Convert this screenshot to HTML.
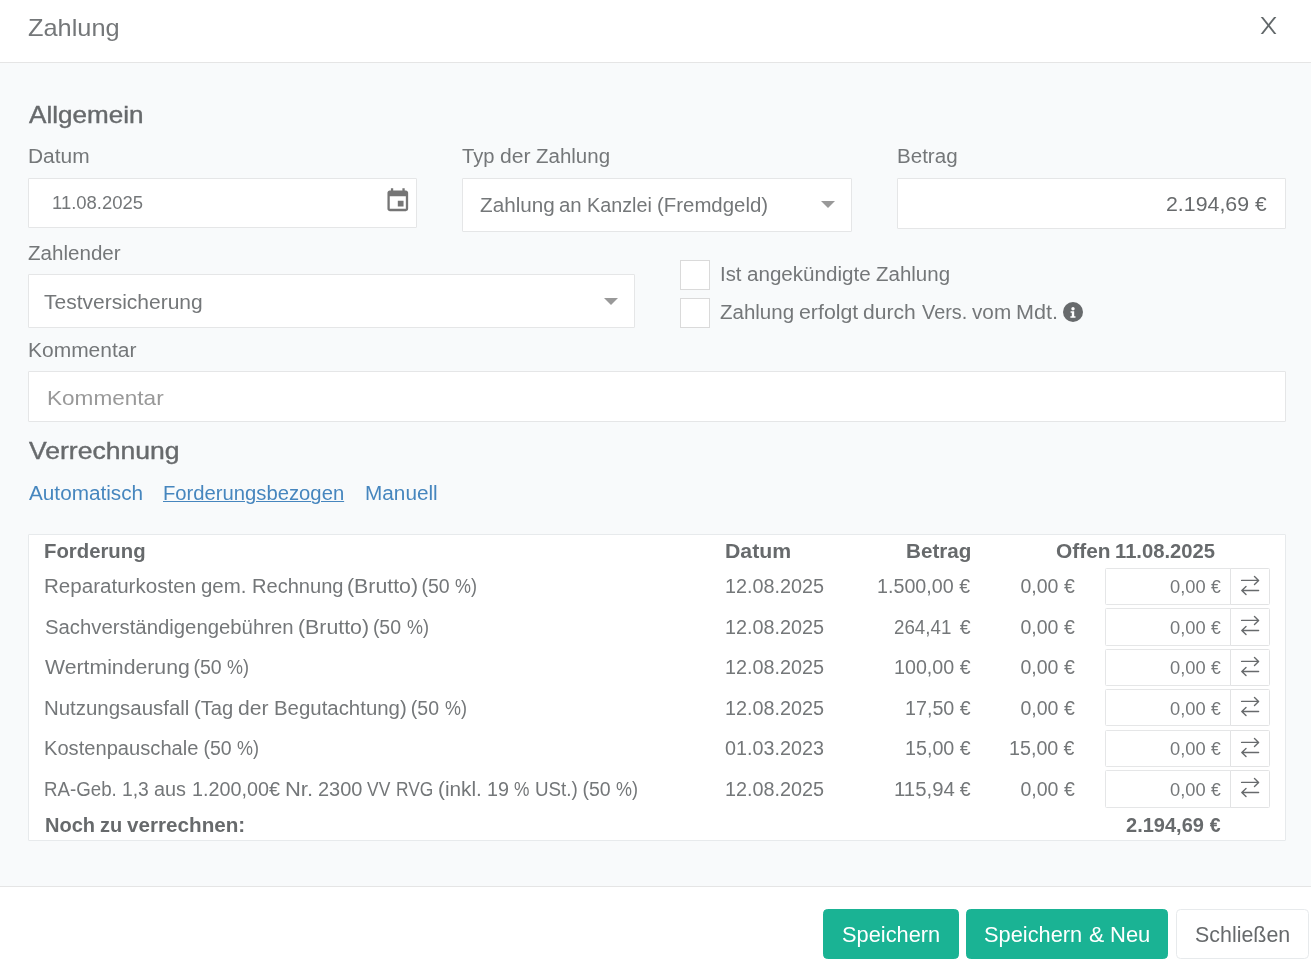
<!DOCTYPE html>
<html lang="de">
<head>
<meta charset="utf-8">
<title>Zahlung</title>
<style>
*{box-sizing:border-box;margin:0;padding:0}
html,body{width:1311px;height:964px;overflow:hidden}
body{position:relative;background:#f8fafb;font-family:"Liberation Sans",sans-serif;color:#676a6c}
.t{position:absolute;white-space:nowrap;transform-origin:0 0;display:block;font-weight:400}
.tx{position:absolute;left:0;top:0;width:1311px;height:964px;will-change:transform}
.bx{position:absolute;background:#fff;border:1px solid #e5e6e7;border-radius:1px}
.hd{display:block;position:absolute;left:0;top:0;width:1311px;height:63px;background:#fff;border-bottom:1px solid #e5e5e5}
.ft{display:block;position:absolute;left:0;top:886px;width:1311px;height:78px;background:#fff;border-top:1px solid #e5e5e5}
.btn{position:absolute;top:909px;height:50px;border-radius:4.5px}
.btn.p{background:#1ab394;border:1px solid #1ab394}
.btn.w{background:#fff;border:1px solid #e7eaec}
svg{position:absolute;overflow:visible}
</style>
</head>
<body>
<header class="hd"></header>
<footer class="ft"></footer>

<!-- form boxes -->
<div class="bx" style="left:28px;top:178px;width:389px;height:50px"></div>
<div class="bx" style="left:462px;top:178px;width:390px;height:54px"></div>
<div class="bx" style="left:897px;top:178px;width:389px;height:51px"></div>
<div class="bx" style="left:28px;top:274px;width:607px;height:54px"></div>
<div class="bx" style="left:680px;top:260px;width:30px;height:30px;border-radius:0;border-color:#dadada"></div>
<div class="bx" style="left:680px;top:298px;width:30px;height:30px;border-radius:0;border-color:#dadada"></div>
<div class="bx" style="left:28px;top:371px;width:1258px;height:51px"></div>
<div class="bx" style="left:28px;top:534px;width:1258px;height:307px;border-color:#e7eaec"></div>

<!-- row inputs -->
<div class="bx" style="left:1105px;top:568px;width:126px;height:37px;border-radius:1.5px 0 0 1.5px"></div>
<div class="bx" style="left:1230px;top:568px;width:40px;height:37px;border-color:#e2e3e4;border-radius:0 1.5px 1.5px 0"></div>
<svg style="left:0;top:0" width="1" height="1"><path d="M1241.6 580.40H1258.4 M1254.5 576.50L1258.6 580.40L1254.5 584.40 M1258.6 590.50H1241.9 M1246 586.60L1241.8 590.50L1246 594.50" stroke="#676a6c" stroke-width="1.4" fill="none" stroke-linecap="round" stroke-linejoin="round"/></svg>
<div class="bx" style="left:1105px;top:608px;width:126px;height:38px;border-radius:1.5px 0 0 1.5px"></div>
<div class="bx" style="left:1230px;top:608px;width:40px;height:38px;border-color:#e2e3e4;border-radius:0 1.5px 1.5px 0"></div>
<svg style="left:0;top:0" width="1" height="1"><path d="M1241.6 620.40H1258.4 M1254.5 616.50L1258.6 620.40L1254.5 624.40 M1258.6 630.50H1241.9 M1246 626.60L1241.8 630.50L1246 634.50" stroke="#676a6c" stroke-width="1.4" fill="none" stroke-linecap="round" stroke-linejoin="round"/></svg>
<div class="bx" style="left:1105px;top:649px;width:126px;height:37px;border-radius:1.5px 0 0 1.5px"></div>
<div class="bx" style="left:1230px;top:649px;width:40px;height:37px;border-color:#e2e3e4;border-radius:0 1.5px 1.5px 0"></div>
<svg style="left:0;top:0" width="1" height="1"><path d="M1241.6 661.40H1258.4 M1254.5 657.50L1258.6 661.40L1254.5 665.40 M1258.6 671.50H1241.9 M1246 667.60L1241.8 671.50L1246 675.50" stroke="#676a6c" stroke-width="1.4" fill="none" stroke-linecap="round" stroke-linejoin="round"/></svg>
<div class="bx" style="left:1105px;top:689px;width:126px;height:37px;border-radius:1.5px 0 0 1.5px"></div>
<div class="bx" style="left:1230px;top:689px;width:40px;height:37px;border-color:#e2e3e4;border-radius:0 1.5px 1.5px 0"></div>
<svg style="left:0;top:0" width="1" height="1"><path d="M1241.6 701.40H1258.4 M1254.5 697.50L1258.6 701.40L1254.5 705.40 M1258.6 711.50H1241.9 M1246 707.60L1241.8 711.50L1246 715.50" stroke="#676a6c" stroke-width="1.4" fill="none" stroke-linecap="round" stroke-linejoin="round"/></svg>
<div class="bx" style="left:1105px;top:730px;width:126px;height:37px;border-radius:1.5px 0 0 1.5px"></div>
<div class="bx" style="left:1230px;top:730px;width:40px;height:37px;border-color:#e2e3e4;border-radius:0 1.5px 1.5px 0"></div>
<svg style="left:0;top:0" width="1" height="1"><path d="M1241.6 742.40H1258.4 M1254.5 738.50L1258.6 742.40L1254.5 746.40 M1258.6 752.50H1241.9 M1246 748.60L1241.8 752.50L1246 756.50" stroke="#676a6c" stroke-width="1.4" fill="none" stroke-linecap="round" stroke-linejoin="round"/></svg>
<div class="bx" style="left:1105px;top:770px;width:126px;height:38px;border-radius:1.5px 0 0 1.5px"></div>
<div class="bx" style="left:1230px;top:770px;width:40px;height:38px;border-color:#e2e3e4;border-radius:0 1.5px 1.5px 0"></div>
<svg style="left:0;top:0" width="1" height="1"><path d="M1241.6 782.40H1258.4 M1254.5 778.50L1258.6 782.40L1254.5 786.40 M1258.6 792.50H1241.9 M1246 788.60L1241.8 792.50L1246 796.50" stroke="#676a6c" stroke-width="1.4" fill="none" stroke-linecap="round" stroke-linejoin="round"/></svg>

<!-- buttons -->
<div class="btn p" role="button" style="left:823px;width:136px"></div>
<div class="btn p" role="button" style="left:966px;width:202px"></div>
<div class="btn w" role="button" style="left:1176px;width:133px"></div>

<!-- close X -->
<svg style="left:0;top:0" width="1" height="1"><path d="M1260.7 16.9h2.3l13.4 17h-2.3z" fill="#62686a"/><path d="M1276.4 16.9h-2.3l-13.4 17h2.3z" fill="#62686a"/></svg>

<!-- calendar icon -->
<svg style="left:384.2px;top:187.25px" width="27.6" height="27.6" viewBox="0 0 24 24"><path fill="#757575" d="M17 12h-5v5h5v-5zM16 1v2H8V1H6v2H5c-1.11 0-1.99.9-1.99 2L3 19c0 1.1.89 2 2 2h14c1.1 0 2-.9 2-2V5c0-1.1-.9-2-2-2h-1V1h-2zm3 18H5V8h14v11z"/></svg>

<!-- select arrows -->
<svg style="left:821px;top:201px" width="14" height="7" viewBox="0 0 14 7"><path d="M0 0h14L7 7z" fill="#999"/></svg>
<svg style="left:604px;top:298px" width="14" height="7" viewBox="0 0 14 7"><path d="M0 0h14L7 7z" fill="#999"/></svg>

<!-- info icon -->
<svg style="left:1062.9px;top:301.9px" width="20" height="20" viewBox="0 0 20 20"><circle cx="10" cy="10" r="10" fill="#676a6c"/><circle cx="10" cy="6.7" r="1.7" fill="#fff"/><path d="M7.6 9.2h3.6v5h1.3v1.6H7.4v-1.6h1.4v-3.4H7.6z" fill="#fff"/></svg>

<div class="tx">
<h4><span class="t" style="left:27.98px;top:16.00px;font-size:24px;line-height:24px;transform:scaleX(1.0562);color:#747779;">Zahlung</span></h4>
<h3><span class="t" style="left:28.70px;top:103.00px;font-size:24px;line-height:24px;transform:scaleX(1.0863);-webkit-text-stroke:0.4px;">Allgemein</span></h3>
<label><span class="t" style="left:28.37px;top:147.00px;font-size:19.5px;line-height:19.5px;transform:scaleX(1.0731);color:#747779;">Datum</span></label>
<label><span class="t" style="left:462.19px;top:147.00px;font-size:19.5px;line-height:19.5px;transform:scaleX(1.0328);color:#747779;">Typ</span> <span class="t" style="left:500.13px;top:147.00px;font-size:19.5px;line-height:19.5px;transform:scaleX(1.0826);color:#747779;">der</span> <span class="t" style="left:536.08px;top:147.00px;font-size:19.5px;line-height:19.5px;transform:scaleX(1.0509);color:#747779;">Zahlung</span></label>
<label><span class="t" style="left:896.69px;top:147.00px;font-size:19.5px;line-height:19.5px;transform:scaleX(1.0548);color:#747779;">Betrag</span></label>
<span><span class="t" style="left:51.87px;top:194.00px;font-size:18px;line-height:18px;transform:scaleX(1.0259);color:#747779;">11.08.2025</span></span>
<span><span class="t" style="left:479.71px;top:196.00px;font-size:19.7px;line-height:19.7px;transform:scaleX(1.0504);color:#747779;">Zahlung</span> <span class="t" style="left:558.64px;top:196.00px;font-size:19.7px;line-height:19.7px;transform:scaleX(1.0375);color:#747779;">an</span> <span class="t" style="left:587.05px;top:196.00px;font-size:19.7px;line-height:19.7px;transform:scaleX(1.0040);color:#747779;">Kanzlei</span> <span class="t" style="left:656.67px;top:196.00px;font-size:19.7px;line-height:19.7px;transform:scaleX(1.0358);color:#747779;">(Fremdgeld)</span></span>
<span><span class="t" style="left:1166.39px;top:193.00px;font-size:21px;line-height:21px;transform:scaleX(1.0157);">2.194,69</span> <span class="t" style="left:1255.09px;top:193.00px;font-size:21px;line-height:21px;transform:scaleX(1.0000);">€</span></span>
<label><span class="t" style="left:28.20px;top:244.00px;font-size:19.5px;line-height:19.5px;transform:scaleX(1.0546);color:#747779;">Zahlender</span></label>
<span><span class="t" style="left:44.34px;top:293.00px;font-size:19.7px;line-height:19.7px;transform:scaleX(1.0663);color:#747779;">Testversicherung</span></span>
<label><span class="t" style="left:719.83px;top:265.00px;font-size:19.5px;line-height:19.5px;transform:scaleX(1.0400);color:#747779;">Ist</span> <span class="t" style="left:746.60px;top:265.00px;font-size:19.5px;line-height:19.5px;transform:scaleX(1.0563);color:#747779;">angekündigte</span> <span class="t" style="left:875.78px;top:265.00px;font-size:19.5px;line-height:19.5px;transform:scaleX(1.0509);color:#747779;">Zahlung</span></label>
<label><span class="t" style="left:720.32px;top:303.00px;font-size:19.5px;line-height:19.5px;transform:scaleX(1.0509);color:#747779;">Zahlung</span> <span class="t" style="left:798.71px;top:303.00px;font-size:19.5px;line-height:19.5px;transform:scaleX(1.0939);color:#747779;">erfolgt</span> <span class="t" style="left:863.45px;top:303.00px;font-size:19.5px;line-height:19.5px;transform:scaleX(1.0802);color:#747779;">durch</span> <span class="t" style="left:921.50px;top:303.00px;font-size:19.5px;line-height:19.5px;transform:scaleX(1.0175);color:#747779;">Vers.</span> <span class="t" style="left:971.51px;top:303.00px;font-size:19.5px;line-height:19.5px;transform:scaleX(1.0629);color:#747779;">vom</span> <span class="t" style="left:1016.20px;top:303.00px;font-size:19.5px;line-height:19.5px;transform:scaleX(1.1079);color:#747779;">Mdt.</span></label>
<label><span class="t" style="left:27.79px;top:341.00px;font-size:19.5px;line-height:19.5px;transform:scaleX(1.0758);color:#747779;">Kommentar</span></label>
<span><span class="t" style="left:46.72px;top:387.00px;font-size:21px;line-height:21px;transform:scaleX(1.0751);color:#999999;">Kommentar</span></span>
<h3><span class="t" style="left:28.60px;top:439.00px;font-size:24px;line-height:24px;transform:scaleX(1.1056);-webkit-text-stroke:0.4px;">Verrechnung</span></h3>
<a><span class="t" style="left:28.82px;top:484.00px;font-size:19.5px;line-height:19.5px;transform:scaleX(1.0637);color:#4686be;">Automatisch</span></a>
<a><span class="t" style="left:162.87px;top:484.00px;font-size:19.5px;line-height:19.5px;transform:scaleX(1.0378);color:#4686be;text-decoration:underline;text-decoration-thickness:1.4px;text-underline-offset:1.2px;">Forderungsbezogen</span></a>
<a><span class="t" style="left:364.98px;top:484.00px;font-size:19.5px;line-height:19.5px;transform:scaleX(1.0649);color:#4686be;">Manuell</span></a>
<b><span class="t" style="left:44.10px;top:542.00px;font-size:19.5px;line-height:19.5px;transform:scaleX(1.0421);font-weight:700;">Forderung</span></b>
<b><span class="t" style="left:724.84px;top:542.00px;font-size:19.5px;line-height:19.5px;transform:scaleX(1.0901);font-weight:700;">Datum</span></b>
<b><span class="t" style="left:905.75px;top:542.00px;font-size:19.5px;line-height:19.5px;transform:scaleX(1.0591);font-weight:700;">Betrag</span></b>
<b><span class="t" style="left:1055.50px;top:542.00px;font-size:19.5px;line-height:19.5px;transform:scaleX(1.0714);font-weight:700;">Offen</span> <span class="t" style="left:1115.25px;top:542.00px;font-size:19.5px;line-height:19.5px;transform:scaleX(1.0369);font-weight:700;">11.08.2025</span></b>
<span><span class="t" style="left:44.14px;top:577.00px;font-size:19.5px;line-height:19.5px;transform:scaleX(1.0548);color:#747779;">Reparaturkosten</span> <span class="t" style="left:201.06px;top:577.00px;font-size:19.5px;line-height:19.5px;transform:scaleX(1.0488);color:#747779;">gem.</span> <span class="t" style="left:251.59px;top:577.00px;font-size:19.5px;line-height:19.5px;transform:scaleX(1.0290);color:#747779;">Rechnung</span> <span class="t" style="left:346.58px;top:577.00px;font-size:19.5px;line-height:19.5px;transform:scaleX(1.0920);color:#747779;">(Brutto)</span> <span class="t" style="left:421.41px;top:577.00px;font-size:19.5px;line-height:19.5px;transform:scaleX(1.0000);color:#747779;">(50</span> <span class="t" style="left:455.33px;top:577.00px;font-size:19.5px;line-height:19.5px;transform:scaleX(0.9205);color:#747779;">%)</span></span>
<span><span class="t" style="left:724.85px;top:577.00px;font-size:19.5px;line-height:19.5px;transform:scaleX(1.0157);color:#747779;">12.08.2025</span></span>
<span><span class="t" style="left:877.02px;top:577.00px;font-size:19.5px;line-height:19.5px;transform:scaleX(1.0102);color:#747779;">1.500,00</span> <span class="t" style="left:959.16px;top:577.00px;font-size:19.5px;line-height:19.5px;transform:scaleX(1.0000);color:#747779;">€</span></span>
<span><span class="t" style="left:1020.50px;top:577.00px;font-size:19.5px;line-height:19.5px;transform:scaleX(1.0000);color:#747779;">0,00</span> <span class="t" style="left:1064.05px;top:577.00px;font-size:19.5px;line-height:19.5px;transform:scaleX(1.0000);color:#747779;">€</span></span>
<span><span class="t" style="left:1170.21px;top:578.00px;font-size:18px;line-height:18px;transform:scaleX(1.0149);color:#747779;">0,00</span> <span class="t" style="left:1210.93px;top:578.00px;font-size:18px;line-height:18px;transform:scaleX(0.9744);color:#747779;">€</span></span>
<span><span class="t" style="left:44.68px;top:618.00px;font-size:19.5px;line-height:19.5px;transform:scaleX(1.0423);color:#747779;">Sachverständigengebühren</span> <span class="t" style="left:298.05px;top:618.00px;font-size:19.5px;line-height:19.5px;transform:scaleX(1.0920);color:#747779;">(Brutto)</span> <span class="t" style="left:372.88px;top:618.00px;font-size:19.5px;line-height:19.5px;transform:scaleX(1.0000);color:#747779;">(50</span> <span class="t" style="left:406.80px;top:618.00px;font-size:19.5px;line-height:19.5px;transform:scaleX(0.9205);color:#747779;">%)</span></span>
<span><span class="t" style="left:724.85px;top:618.00px;font-size:19.5px;line-height:19.5px;transform:scaleX(1.0157);color:#747779;">12.08.2025</span></span>
<span><span class="t" style="left:893.58px;top:618.00px;font-size:19.5px;line-height:19.5px;transform:scaleX(0.9610);color:#747779;">264,41</span> <span class="t" style="left:959.65px;top:618.00px;font-size:19.5px;line-height:19.5px;transform:scaleX(1.0000);color:#747779;">€</span></span>
<span><span class="t" style="left:1020.50px;top:618.00px;font-size:19.5px;line-height:19.5px;transform:scaleX(1.0000);color:#747779;">0,00</span> <span class="t" style="left:1064.05px;top:618.00px;font-size:19.5px;line-height:19.5px;transform:scaleX(1.0000);color:#747779;">€</span></span>
<span><span class="t" style="left:1170.21px;top:619.00px;font-size:18px;line-height:18px;transform:scaleX(1.0149);color:#747779;">0,00</span> <span class="t" style="left:1210.93px;top:619.00px;font-size:18px;line-height:18px;transform:scaleX(0.9744);color:#747779;">€</span></span>
<span><span class="t" style="left:45.03px;top:658.00px;font-size:19.5px;line-height:19.5px;transform:scaleX(1.0892);color:#747779;">Wertminderung</span> <span class="t" style="left:193.50px;top:658.00px;font-size:19.5px;line-height:19.5px;transform:scaleX(1.0000);color:#747779;">(50</span> <span class="t" style="left:227.43px;top:658.00px;font-size:19.5px;line-height:19.5px;transform:scaleX(0.9205);color:#747779;">%)</span></span>
<span><span class="t" style="left:724.85px;top:658.00px;font-size:19.5px;line-height:19.5px;transform:scaleX(1.0157);color:#747779;">12.08.2025</span></span>
<span><span class="t" style="left:893.86px;top:658.00px;font-size:19.5px;line-height:19.5px;transform:scaleX(1.0087);color:#747779;">100,00</span> <span class="t" style="left:959.73px;top:658.00px;font-size:19.5px;line-height:19.5px;transform:scaleX(1.0000);color:#747779;">€</span></span>
<span><span class="t" style="left:1020.50px;top:658.00px;font-size:19.5px;line-height:19.5px;transform:scaleX(1.0000);color:#747779;">0,00</span> <span class="t" style="left:1064.05px;top:658.00px;font-size:19.5px;line-height:19.5px;transform:scaleX(1.0000);color:#747779;">€</span></span>
<span><span class="t" style="left:1170.21px;top:659.00px;font-size:18px;line-height:18px;transform:scaleX(1.0149);color:#747779;">0,00</span> <span class="t" style="left:1210.93px;top:659.00px;font-size:18px;line-height:18px;transform:scaleX(0.9744);color:#747779;">€</span></span>
<span><span class="t" style="left:44.24px;top:699.00px;font-size:19.5px;line-height:19.5px;transform:scaleX(1.0478);color:#747779;">Nutzungsausfall</span> <span class="t" style="left:194.44px;top:699.00px;font-size:19.5px;line-height:19.5px;transform:scaleX(1.0352);color:#747779;">(Tag</span> <span class="t" style="left:238.14px;top:699.00px;font-size:19.5px;line-height:19.5px;transform:scaleX(1.0826);color:#747779;">der</span> <span class="t" style="left:274.06px;top:699.00px;font-size:19.5px;line-height:19.5px;transform:scaleX(1.0463);color:#747779;">Begutachtung)</span> <span class="t" style="left:410.83px;top:699.00px;font-size:19.5px;line-height:19.5px;transform:scaleX(1.0000);color:#747779;">(50</span> <span class="t" style="left:444.75px;top:699.00px;font-size:19.5px;line-height:19.5px;transform:scaleX(0.9205);color:#747779;">%)</span></span>
<span><span class="t" style="left:724.85px;top:699.00px;font-size:19.5px;line-height:19.5px;transform:scaleX(1.0157);color:#747779;">12.08.2025</span></span>
<span><span class="t" style="left:904.93px;top:699.00px;font-size:19.5px;line-height:19.5px;transform:scaleX(1.0108);color:#747779;">17,50</span> <span class="t" style="left:959.65px;top:699.00px;font-size:19.5px;line-height:19.5px;transform:scaleX(1.0000);color:#747779;">€</span></span>
<span><span class="t" style="left:1020.50px;top:699.00px;font-size:19.5px;line-height:19.5px;transform:scaleX(1.0000);color:#747779;">0,00</span> <span class="t" style="left:1064.05px;top:699.00px;font-size:19.5px;line-height:19.5px;transform:scaleX(1.0000);color:#747779;">€</span></span>
<span><span class="t" style="left:1170.21px;top:700.00px;font-size:18px;line-height:18px;transform:scaleX(1.0149);color:#747779;">0,00</span> <span class="t" style="left:1210.93px;top:700.00px;font-size:18px;line-height:18px;transform:scaleX(0.9744);color:#747779;">€</span></span>
<span><span class="t" style="left:44.19px;top:739.00px;font-size:19.5px;line-height:19.5px;transform:scaleX(1.0323);color:#747779;">Kostenpauschale</span> <span class="t" style="left:203.40px;top:739.00px;font-size:19.5px;line-height:19.5px;transform:scaleX(1.0000);color:#747779;">(50</span> <span class="t" style="left:237.32px;top:739.00px;font-size:19.5px;line-height:19.5px;transform:scaleX(0.9205);color:#747779;">%)</span></span>
<span><span class="t" style="left:725.37px;top:739.00px;font-size:19.5px;line-height:19.5px;transform:scaleX(1.0130);color:#747779;">01.03.2023</span></span>
<span><span class="t" style="left:904.93px;top:739.00px;font-size:19.5px;line-height:19.5px;transform:scaleX(1.0108);color:#747779;">15,00</span> <span class="t" style="left:959.65px;top:739.00px;font-size:19.5px;line-height:19.5px;transform:scaleX(1.0000);color:#747779;">€</span></span>
<span><span class="t" style="left:1008.83px;top:739.00px;font-size:19.5px;line-height:19.5px;transform:scaleX(1.0108);color:#747779;">15,00</span> <span class="t" style="left:1063.55px;top:739.00px;font-size:19.5px;line-height:19.5px;transform:scaleX(1.0000);color:#747779;">€</span></span>
<span><span class="t" style="left:1170.21px;top:740.00px;font-size:18px;line-height:18px;transform:scaleX(1.0149);color:#747779;">0,00</span> <span class="t" style="left:1210.93px;top:740.00px;font-size:18px;line-height:18px;transform:scaleX(0.9744);color:#747779;">€</span></span>
<span><span class="t" style="left:44.46px;top:780.00px;font-size:19.5px;line-height:19.5px;transform:scaleX(0.9588);color:#747779;">RA-Geb.</span> <span class="t" style="left:122.29px;top:780.00px;font-size:19.5px;line-height:19.5px;transform:scaleX(0.9899);color:#747779;">1,3</span> <span class="t" style="left:154.43px;top:780.00px;font-size:19.5px;line-height:19.5px;transform:scaleX(1.0167);color:#747779;">aus</span> <span class="t" style="left:191.81px;top:780.00px;font-size:19.5px;line-height:19.5px;transform:scaleX(1.0147);color:#747779;">1.200,00€</span> <span class="t" style="left:284.93px;top:780.00px;font-size:19.5px;line-height:19.5px;transform:scaleX(1.1264);color:#747779;">Nr.</span> <span class="t" style="left:317.69px;top:780.00px;font-size:19.5px;line-height:19.5px;transform:scaleX(1.0240);color:#747779;">2300</span> <span class="t" style="left:367.38px;top:780.00px;font-size:19.5px;line-height:19.5px;transform:scaleX(0.8942);color:#747779;">VV</span> <span class="t" style="left:396.11px;top:780.00px;font-size:19.5px;line-height:19.5px;transform:scaleX(0.8910);color:#747779;">RVG</span> <span class="t" style="left:438.02px;top:780.00px;font-size:19.5px;line-height:19.5px;transform:scaleX(1.0654);color:#747779;">(inkl.</span> <span class="t" style="left:486.81px;top:780.00px;font-size:19.5px;line-height:19.5px;transform:scaleX(1.0130);color:#747779;">19</span> <span class="t" style="left:514.28px;top:780.00px;font-size:19.5px;line-height:19.5px;transform:scaleX(0.8906);color:#747779;">%</span> <span class="t" style="left:535.44px;top:780.00px;font-size:19.5px;line-height:19.5px;transform:scaleX(0.9641);color:#747779;">USt.)</span> <span class="t" style="left:582.43px;top:780.00px;font-size:19.5px;line-height:19.5px;transform:scaleX(1.0000);color:#747779;">(50</span> <span class="t" style="left:616.36px;top:780.00px;font-size:19.5px;line-height:19.5px;transform:scaleX(0.9205);color:#747779;">%)</span></span>
<span><span class="t" style="left:724.85px;top:780.00px;font-size:19.5px;line-height:19.5px;transform:scaleX(1.0157);color:#747779;">12.08.2025</span></span>
<span><span class="t" style="left:893.80px;top:780.00px;font-size:19.5px;line-height:19.5px;transform:scaleX(1.0444);color:#747779;">115,94</span> <span class="t" style="left:959.73px;top:780.00px;font-size:19.5px;line-height:19.5px;transform:scaleX(1.0000);color:#747779;">€</span></span>
<span><span class="t" style="left:1020.50px;top:780.00px;font-size:19.5px;line-height:19.5px;transform:scaleX(1.0000);color:#747779;">0,00</span> <span class="t" style="left:1064.05px;top:780.00px;font-size:19.5px;line-height:19.5px;transform:scaleX(1.0000);color:#747779;">€</span></span>
<span><span class="t" style="left:1170.21px;top:781.00px;font-size:18px;line-height:18px;transform:scaleX(1.0149);color:#747779;">0,00</span> <span class="t" style="left:1210.93px;top:781.00px;font-size:18px;line-height:18px;transform:scaleX(0.9744);color:#747779;">€</span></span>
<b><span class="t" style="left:44.66px;top:816.00px;font-size:19.5px;line-height:19.5px;transform:scaleX(1.0270);font-weight:700;">Noch</span> <span class="t" style="left:99.75px;top:816.00px;font-size:19.5px;line-height:19.5px;transform:scaleX(1.0253);font-weight:700;">zu</span> <span class="t" style="left:127.41px;top:816.00px;font-size:19.5px;line-height:19.5px;transform:scaleX(1.0592);font-weight:700;">verrechnen:</span></b>
<b><span class="t" style="left:1126.37px;top:816.00px;font-size:19.5px;line-height:19.5px;transform:scaleX(1.0268);font-weight:700;">2.194,69</span> <span class="t" style="left:1209.71px;top:816.00px;font-size:19.5px;line-height:19.5px;transform:scaleX(1.0000);font-weight:700;">€</span></b>
<span><span class="t" style="left:841.87px;top:925.00px;font-size:21.25px;line-height:21.25px;transform:scaleX(1.0267);color:#ffffff;">Speichern</span></span>
<span><span class="t" style="left:984.28px;top:925.00px;font-size:21.25px;line-height:21.25px;transform:scaleX(1.0267);color:#ffffff;">Speichern</span> <span class="t" style="left:1088.83px;top:925.00px;font-size:21.25px;line-height:21.25px;transform:scaleX(1.0755);color:#ffffff;">&amp;</span> <span class="t" style="left:1109.83px;top:925.00px;font-size:21.25px;line-height:21.25px;transform:scaleX(1.0347);color:#ffffff;">Neu</span></span>
<span><span class="t" style="left:1194.59px;top:925.00px;font-size:21.25px;line-height:21.25px;transform:scaleX(1.0081);">Schließen</span></span>
</div>
</body>
</html>
